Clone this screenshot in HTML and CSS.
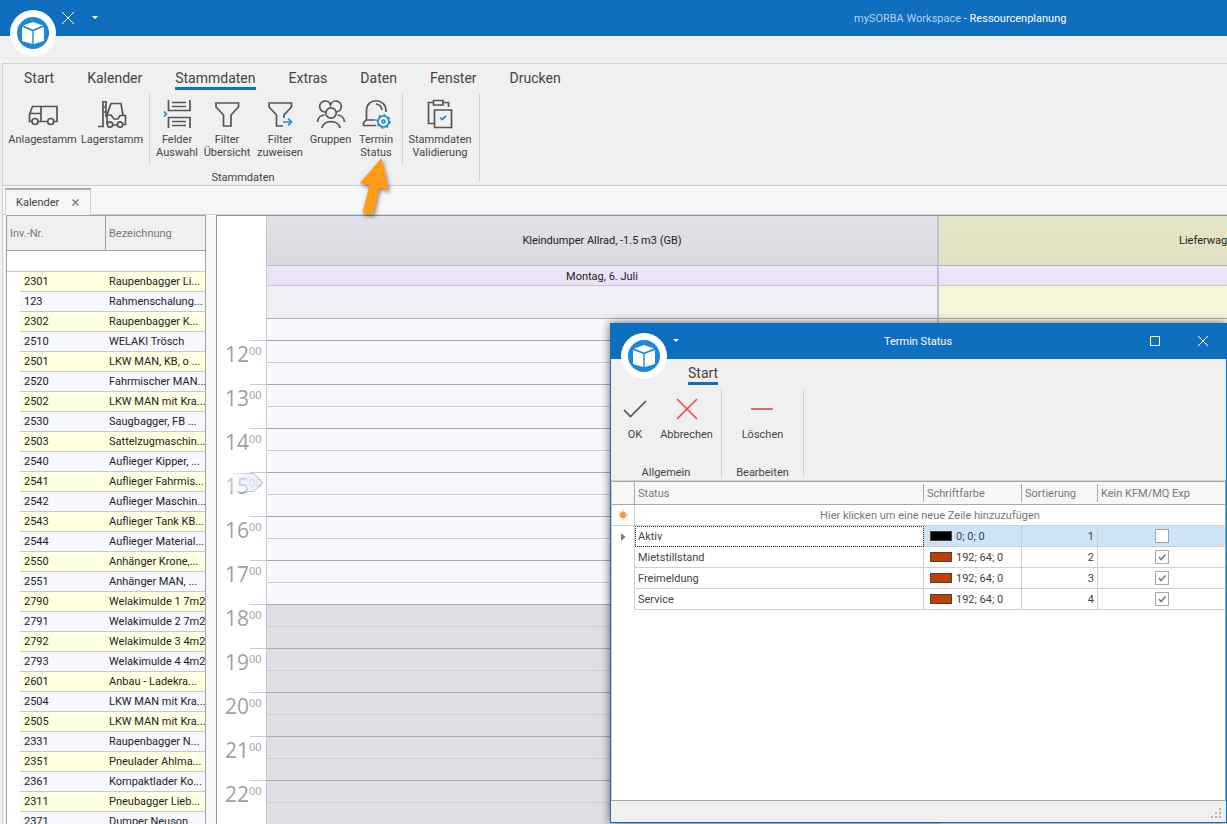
FILE: index.html
```html
<!DOCTYPE html>
<html lang="de">
<head>
    <meta charset="UTF-8">
    <meta name="viewport" content="width=device-width, initial-scale=1.0">
    <title>mySORBA Workspace - Ressourcenplanung</title>
    <link rel="stylesheet" href="styles.css">
</head>
<body>
    <!-- Shared symbols -->
    <svg class="symbols" aria-hidden="true">
        <symbol id="logo" viewBox="0 0 46 46">
            <circle cx="23" cy="23" r="23" fill="#fff"/>
            <circle cx="23" cy="23" r="16" fill="#1e88d2"/>
            <path d="M23 12 33 15.500 23 19.500 13 15.500ZM12 17 22.300 21V34L12 31ZM34 17 23.700 21V34L34 31Z" fill="#fff"/>
        </symbol>
        <symbol id="funnel" viewBox="0 0 32 32">
            <path d="M5 5H27.500V9L20 17V28H12.500V17L5 9Z"/>
        </symbol>
    </svg>

    <div class="app">
        <header class="titlebar">
            <button class="app-logo" aria-label="Menü"><svg><use href="#logo"/></svg></button>
            <button class="quick" aria-label="Schliessen"><svg width="14" height="14" viewBox="0 0 14 14"><path d="M1 1 13 13M13 1 1 13"/></svg></button>
            <button class="quick quick-arrow" aria-label="Anpassen"><svg width="6" height="4" viewBox="0 0 6 4"><path class="solid" d="M0 0H6L3 3Z"/></svg></button>
            <h1><span>mySORBA Workspace</span> - Ressourcenplanung</h1>
        </header>

        <div class="frame">
            <div class="ribbon">
                <nav class="ribbon-tabs">
                    <a href="#">Start</a>
                    <a href="#">Kalender</a>
                    <a href="#" class="active">Stammdaten</a>
                    <a href="#">Extras</a>
                    <a href="#">Daten</a>
                    <a href="#">Fenster</a>
                    <a href="#">Drucken</a>
                </nav>
                <div class="ribbon-group">
                    <div class="ribbon-buttons">
                        <button>
                            <svg class="icon" viewBox="0 0 32 32"><path d="M5 23.500H2.500V16.500L5.500 8.500H30V23.500H27M11 23.500H20.500M14 8.500V23.500M3 15.500H14"/><circle cx="8" cy="23.500" r="3"/><circle cx="23.700" cy="23.500" r="3"/></svg>
                            Anlagestamm
                        </button>
                        <button>
                            <svg class="icon" viewBox="0 0 32 32"><path d="M7 3V28M10 3V19M7 4H10M7 9H10M7 14H10M2 28.500H8M11 26V17L15 5.500H25L27 17M11 17H15L18 21H22L24 17.500H29.500V26.500H27M17 27H21"/><circle cx="14" cy="26.500" r="2.700"/><circle cx="24" cy="26.500" r="2.700"/></svg>
                            Lagerstamm
                        </button>
                        <span class="divider"></span>
                        <button>
                            <svg class="icon" viewBox="0 0 32 32"><path d="M7.500 2V12.500H29V2M11 4.500H25M11 8.500H25M7.500 30V19.500H29V30M11 23.500H25M11 27.500H25"/><path class="blue" d="M3 13.500 5.500 16 3 18.500"/></svg>
                            Felder<br>Auswahl
                        </button>
                        <button>
                            <svg class="icon"><use href="#funnel"/></svg>
                            Filter<br>Übersicht
                        </button>
                        <button>
                            <svg class="icon" viewBox="0 0 32 32"><path d="M20 20V17L27.500 9V5H5V9L12.500 17V28H19"/><path class="blue" d="M19 24H27.500M24 20.500 27.500 24 24 27.500"/></svg>
                            Filter<br>zuweisen
                        </button>
                        <button>
                            <svg class="icon" viewBox="0 0 32 32"><path d="M10.500 14A5.500 5.500 0 1 1 15.500 7A5.500 5.500 0 1 1 21 14M2.500 24C3 19.500 6 17 9.500 17M29.500 24C29 19.500 26 17 22.500 17M7 30C8 21.500 24 21.500 25 30"/><circle cx="16" cy="15" r="5.200"/></svg>
                            Gruppen
                        </button>
                        <button>
                            <svg class="icon" viewBox="0 0 32 32"><path d="M16 27.500H3.500V25L6.500 21.500V12.500C6.500 -0.500 25.500 -0.500 26 12.500V14M6.500 22H15.500M16 6C19.500 6.500 21.500 8.500 22 12"/><circle class="blue teeth" cx="23.500" cy="23.500" r="6.500"/><circle class="blue" cx="23.500" cy="23.500" r="5.500"/><circle class="blue" cx="23.500" cy="23.500" r="1.500"/></svg>
                            Termin<br>Status
                        </button>
                        <span class="divider"></span>
                        <button>
                            <svg class="icon" viewBox="0 0 32 32"><path d="M9 4.500H4.500V25.500H10M19 4.500H24.500V9M9.500 2.500H19V7H9.500ZM10.500 12H27.500V29.500H10.500Z"/><path class="blue" d="M16 19.500 18 21.500 22 18"/></svg>
                            Stammdaten<br>Validierung
                        </button>
                    </div>
                    <div class="caption">Stammdaten</div>
                </div>
            </div>

            <div class="doc-tabs">
                <div class="doc-tab">Kalender <button aria-label="Tab schliessen"><svg width="7" height="7" viewBox="0 0 7 7"><path d="M.5 .5 6.500 6.500M6.500 .5 .5 6.500"/></svg></button></div>
            </div>

            <main class="workspace">
                <div class="inventory">
                    <table>
                        <colgroup><col class="c-indicator"><col class="c-number"><col></colgroup>
                        <thead>
                            <tr><th colspan="2">Inv.-Nr.</th><th>Bezeichnung</th></tr>
                        </thead>
                        <tbody>
                            <tr class="filter"><td colspan="3"></td></tr>
                            <tr><td></td><td>2301</td><td>Raupenbagger Li...</td></tr>
                            <tr><td></td><td>123</td><td>Rahmenschalung...</td></tr>
                            <tr><td></td><td>2302</td><td>Raupenbagger K...</td></tr>
                            <tr><td></td><td>2510</td><td>WELAKI Trösch</td></tr>
                            <tr><td></td><td>2501</td><td>LKW MAN, KB, o ...</td></tr>
                            <tr><td></td><td>2520</td><td>Fahrmischer MAN...</td></tr>
                            <tr><td></td><td>2502</td><td>LKW MAN mit Kra...</td></tr>
                            <tr><td></td><td>2530</td><td>Saugbagger, FB ...</td></tr>
                            <tr><td></td><td>2503</td><td>Sattelzugmaschin...</td></tr>
                            <tr><td></td><td>2540</td><td>Auflieger Kipper, ...</td></tr>
                            <tr><td></td><td>2541</td><td>Auflieger Fahrmis...</td></tr>
                            <tr><td></td><td>2542</td><td>Auflieger Maschin...</td></tr>
                            <tr><td></td><td>2543</td><td>Auflieger Tank KB...</td></tr>
                            <tr><td></td><td>2544</td><td>Auflieger Material...</td></tr>
                            <tr><td></td><td>2550</td><td>Anhänger Krone,...</td></tr>
                            <tr><td></td><td>2551</td><td>Anhänger MAN, ...</td></tr>
                            <tr><td></td><td>2790</td><td>Welakimulde 1 7m2</td></tr>
                            <tr><td></td><td>2791</td><td>Welakimulde 2 7m2</td></tr>
                            <tr><td></td><td>2792</td><td>Welakimulde 3 4m2</td></tr>
                            <tr><td></td><td>2793</td><td>Welakimulde 4 4m2</td></tr>
                            <tr><td></td><td>2601</td><td>Anbau - Ladekra...</td></tr>
                            <tr><td></td><td>2504</td><td>LKW MAN mit Kra...</td></tr>
                            <tr><td></td><td>2505</td><td>LKW MAN mit Kra...</td></tr>
                            <tr><td></td><td>2331</td><td>Raupenbagger N...</td></tr>
                            <tr><td></td><td>2351</td><td>Pneulader Ahlma...</td></tr>
                            <tr><td></td><td>2361</td><td>Kompaktlader Ko...</td></tr>
                            <tr><td></td><td>2311</td><td>Pneubagger Lieb...</td></tr>
                            <tr><td></td><td>2371</td><td>Dumper Neuson</td></tr>
                        </tbody>
                    </table>
                </div>

                <div class="calendar">
                    <ol class="ruler">
                        <li>12<sup>00</sup></li>
                        <li>13<sup>00</sup></li>
                        <li>14<sup>00</sup></li>
                        <li>15<sup>00</sup>
                            <svg class="now" width="42" height="24" viewBox="0 0 42 24">
                                <defs><linearGradient id="fade"><stop offset="0" stop-color="#fff" stop-opacity=".3"/><stop offset=".6" stop-color="#e8eefa" stop-opacity=".7"/><stop offset="1" stop-color="#e4ecfa" stop-opacity=".8"/></linearGradient>
                                <linearGradient id="edge"><stop offset="0" stop-color="#b4b9c8" stop-opacity="0"/><stop offset="1" stop-color="#a8aebc"/></linearGradient></defs>
                                <path d="M1 1.500H29L38 10.500 29 19.500H1" fill="url(#fade)" stroke="url(#edge)"/>
                            </svg>
                        </li>
                        <li>16<sup>00</sup></li>
                        <li>17<sup>00</sup></li>
                        <li>18<sup>00</sup></li>
                        <li>19<sup>00</sup></li>
                        <li>20<sup>00</sup></li>
                        <li>21<sup>00</sup></li>
                        <li>22<sup>00</sup></li>
                    </ol>
                    <section class="resource">
                        <h2>Kleindumper Allrad, -1.5 m3 (GB)</h2>
                        <h3>Montag, 6. Juli</h3>
                        <div class="all-day"></div>
                        <div class="slots"></div>
                        <div class="slots off-hours"></div>
                    </section>
                    <section class="resource resource-yellow">
                        <h2>Lieferwagen VW Crafter, Kasten, -3.5 to</h2>
                        <h3></h3>
                        <div class="all-day"></div>
                        <div class="slots"></div>
                    </section>
                </div>
            </main>
        </div>

        <!-- Pointer at the Termin Status button -->
        <svg class="pointer" width="40" height="68" viewBox="0 0 40 68"><path d="M25.500 4 33 36 23.500 33.500 17 61 6.500 58.500 13.500 31.500 4 29Z"/></svg>

        <section class="dialog" role="dialog" aria-labelledby="dialog-title">
            <header class="dialog-title">
                <button class="app-logo" aria-label="Menü"><svg><use href="#logo"/></svg></button>
                <button class="quick dialog-arrow" aria-label="Anpassen"><svg width="6" height="4" viewBox="0 0 6 4"><path class="solid" d="M0 0H6L3 3Z"/></svg></button>
                <h2 id="dialog-title">Termin Status</h2>
                <button class="win-button" aria-label="Maximieren"><svg width="10" height="10" viewBox="0 0 10 10"><path d="M.5 .5H9.500V9.500H.5Z"/></svg></button>
                <button class="win-button" aria-label="Schliessen"><svg width="10" height="10" viewBox="0 0 10 10"><path d="M0 0 10 10M10 0 0 10"/></svg></button>
            </header>
            <nav class="ribbon-tabs dialog-tabs"><a href="#" class="active">Start</a></nav>
            <div class="dialog-ribbon">
                <div class="dialog-group">
                    <div class="dialog-buttons">
                        <button class="ok"><svg class="icon" viewBox="0 0 32 32"><path d="M5 17 11.500 23.500 27 8"/></svg>OK</button>
                        <button class="cancel"><svg class="icon" viewBox="0 0 32 32"><path class="red" d="M6 6 26 26M26 6 6 26"/></svg>Abbrechen</button>
                    </div>
                    <div class="caption">Allgemein</div>
                </div>
                <div class="dialog-group">
                    <div class="dialog-buttons">
                        <button><svg class="icon" viewBox="0 0 32 32"><path class="red" d="M5 16H27"/></svg>Löschen</button>
                    </div>
                    <div class="caption">Bearbeiten</div>
                </div>
            </div>
            <div class="status-grid">
                <table>
                    <colgroup><col class="c-mark"><col><col class="c-color"><col class="c-sort"><col class="c-exp"></colgroup>
                    <thead>
                        <tr><th></th><th>Status</th><th>Schriftfarbe</th><th>Sortierung</th><th>Kein KFM/MQ Exp</th></tr>
                    </thead>
                    <tbody>
                        <tr class="new-row">
                            <td class="mark"><svg width="10" height="10" viewBox="0 0 10 10"><path d="M5 0V10M0 5H10M1.500 1.500 8.500 8.500M8.500 1.500 1.500 8.500" stroke="#f9a24a"/><circle cx="5" cy="5" r="3" fill="#f9943a"/></svg></td>
                            <td colspan="4">Hier klicken um eine neue Zeile hinzuzufügen</td>
                        </tr>
                        <tr class="selected">
                            <td class="mark"><svg width="5" height="8" viewBox="0 0 5 8"><path d="M0 0 4.500 4 0 8Z" fill="#808080"/></svg></td>
                            <td class="focused">Aktiv</td>
                            <td><span class="swatch black"></span>0; 0; 0</td>
                            <td class="number">1</td>
                            <td class="check"><input type="checkbox" aria-label="Kein KFM/MQ Exp Aktiv"></td>
                        </tr>
                        <tr>
                            <td class="mark"></td>
                            <td>Mietstillstand</td>
                            <td><span class="swatch"></span>192; 64; 0</td>
                            <td class="number">2</td>
                            <td class="check"><input type="checkbox" checked aria-label="Kein KFM/MQ Exp Mietstillstand"></td>
                        </tr>
                        <tr>
                            <td class="mark"></td>
                            <td>Freimeldung</td>
                            <td><span class="swatch"></span>192; 64; 0</td>
                            <td class="number">3</td>
                            <td class="check"><input type="checkbox" checked aria-label="Kein KFM/MQ Exp Freimeldung"></td>
                        </tr>
                        <tr>
                            <td class="mark"></td>
                            <td>Service</td>
                            <td><span class="swatch"></span>192; 64; 0</td>
                            <td class="number">4</td>
                            <td class="check"><input type="checkbox" checked aria-label="Kein KFM/MQ Exp Service"></td>
                        </tr>
                    </tbody>
                </table>
            </div>
            <footer class="dialog-footer">
                <svg width="12" height="12" viewBox="0 0 12 12"><path d="M8 0h2v2h-2zM4 4h2v2h-2zM8 4h2v2h-2zM0 8h2v2h-2zM4 8h2v2h-2zM8 8h2v2h-2z" fill="#b4b4b4"/></svg>
            </footer>
        </section>
    </div>
</body>
</html>
```
FILE: styles.css
```css
* {
    box-sizing: border-box;
}
body {
    margin: 0;
    font-family: Tahoma, Roboto, sans-serif;
    font-size: 11px;
    line-height: 13px;
    color: #444;
    background-color: #f0f0f0;
}
button {
    font: inherit;
    color: inherit;
    background: none;
    border: none;
    padding: 0;
}
h1, h2, h3 {
    margin: 0;
    font-size: 11px;
    font-weight: normal;
}
table {
    border-collapse: separate;
    border-spacing: 0;
    table-layout: fixed;
    width: 100%;
}
svg {
    display: block;
    fill: none;
}
.symbols {
    position: absolute;
    width: 0;
    height: 0;
}
.app {
    position: relative;
    height: 100vh;
    display: flex;
    flex-direction: column;
    overflow: hidden;
}

/* Title bar */
.titlebar {
    flex: none;
    display: flex;
    align-items: center;
    height: 36px;
    padding-left: 10px;
    background-color: #106ebe;
    color: #fff;
}
.app-logo {
    flex: none;
    align-self: flex-start;
    width: 46px;
    height: 46px;
    margin-top: 10px;
    z-index: 1;
}
.app-logo svg {
    width: 46px;
    height: 46px;
}
.quick {
    margin-left: 5px;
}
.quick svg, .win-button svg {
    stroke: #fff;
}
.quick .solid {
    fill: #fff;
    stroke: none;
}
.quick-arrow {
    margin-left: 17px;
}
.titlebar h1 {
    margin-left: 756px;
    white-space: nowrap;
}
.titlebar h1 span {
    color: #b5d2ec;
}

/* Ribbon */
.frame {
    flex: 1;
    min-height: 0;
    display: flex;
    flex-direction: column;
    margin: 27px 0 0 2px;
    border-left: 1px solid #d0d0d0;
    border-top: 1px solid #d0d0d0;
    background-color: #f7f7f7;
}
.ribbon {
    flex: none;
    height: 122px;
    background-color: #f0f0f0;
    border-bottom: 1px solid #d0d0d0;
}
.ribbon-tabs {
    display: flex;
    gap: 33px;
    padding: 4px 0 0 21px;
    font-size: 14px;
    line-height: 21px;
}
.ribbon-tabs a {
    height: 22px;
    color: #444;
    text-decoration: none;
    border-bottom: 3px solid transparent;
}
.ribbon-tabs .active {
    border-color: #106ebe;
}
.ribbon-group {
    display: inline-flex;
    flex-direction: column;
    height: 88px;
    margin-top: 4px;
    padding-left: 4px;
    border-right: 1px solid #d0d0d0;
}
.ribbon-buttons {
    display: grid;
    grid-template-columns: 71px 68px 7px 48px 52px 54px 47px 44px 8px 73px;
    height: 70px;
}
.ribbon-buttons button, .dialog-buttons button {
    padding-top: 4px;
    white-space: nowrap;
}
.ribbon-buttons button {
    align-self: start;
}
.ribbon-buttons button:last-child {
    padding-right: 5px;
}
.icon {
    width: 32px;
    height: 32px;
    margin: 0 auto 3px;
    stroke: #555;
    stroke-width: 1.7;
}
.icon .blue {
    stroke: #1e88d2;
}
.icon .teeth {
    stroke-dasharray: 2 3;
}
.icon .red {
    stroke: #f04a48;
}
.divider {
    width: 1px;
    height: 70px;
    margin: 0 auto;
    background-color: #d0d0d0;
}
.caption {
    margin-top: 7px;
    text-align: center;
}

/* Document tabs */
.doc-tabs {
    flex: none;
    display: flex;
    height: 29px;
    padding: 2px 0 0 2px;
    border-bottom: 1px solid #d0d0d0;
}
.doc-tab {
    display: flex;
    align-items: center;
    gap: 13px;
    height: 27px;
    padding: 0 11px 0 10px;
    border: 1px solid #d0d0d0;
    border-top: 2px solid #a8a8a8;
    border-bottom: none;
    background-color: #f7f7f7;
}
.doc-tab svg {
    stroke: #777;
    stroke-width: 1.4;
}
.workspace {
    flex: 1;
    min-height: 0;
    display: flex;
    gap: 10px;
    padding-left: 3px;
    color: #222;
}

/* Inventory list */
.inventory {
    flex: none;
    width: 200px;
    overflow: hidden;
    border: 1px solid #a0a0a0;
    border-bottom: none;
    background-color: #fff;
}
.inventory .c-indicator {
    width: 13px;
}
.inventory .c-number {
    width: 86px;
}
.inventory th {
    height: 35px;
    padding: 0 3px;
    background-color: #f0f0f0;
    border-bottom: 1px solid #a0a0a0;
    color: #777;
    font-weight: normal;
    text-align: left;
}
.inventory th:first-child {
    border-right: 1px solid #a0a0a0;
}
.inventory td {
    height: 20px;
    padding: 0 3px;
    border-bottom: 1px solid #c8c8c8;
    white-space: nowrap;
    background-color: #f8f8ff;
}
.inventory td:nth-child(2) {
    padding-left: 4px;
}
.inventory tr:nth-child(even) td {
    background-color: #ffffe1;
}
.inventory tr td:first-child,
.inventory tr:nth-child(even) td:first-child {
    padding: 0;
    border-bottom: none;
    background-color: #fff;
}
.inventory .filter td:first-child {
    height: 21px;
    border-bottom: 1px solid #c8c8c8;
}

/* Calendar */
.calendar {
    flex: 1;
    min-width: 0;
    display: flex;
    overflow: hidden;
    border-left: 1px solid #9494a0;
    border-top: 1px solid #9494a0;
}
.ruler {
    flex: none;
    width: 50px;
    margin: 0;
    padding: 124px 0 0;
    list-style: none;
    background-color: #fff;
    border-right: 1px solid #c8c8d0;
    color: #a0a0a8;
    font-family: Tahoma, "Open Sans", sans-serif;
}
.ruler li {
    position: relative;
    display: flex;
    height: 44px;
    padding-left: 8px;
    font-size: 21px;
    line-height: 28px;
    background: linear-gradient(#c8c8d0, #c8c8d0) right top / 16px 1px no-repeat;
}
.ruler sup {
    font-size: 11px;
    line-height: 22px;
    vertical-align: top;
}
.ruler .now {
    position: absolute;
    left: 8px;
    top: 0;
}
.resource {
    flex: 0 0 672px;
    display: flex;
    flex-direction: column;
    border-right: 2px solid #c4c4cb;
    background-color: #f8f8ff;
    text-align: center;
}
.resource h2 {
    flex: none;
    height: 50px;
    line-height: 50px;
    background: linear-gradient(#e2e1e7, #dad9df);
    border-bottom: 1px solid #b8b8be;
}
.resource h3 {
    flex: none;
    height: 20px;
    line-height: 21px;
    background: linear-gradient(#efe7fa, #e9e0f6);
    border-bottom: 1px solid #c8c8d0;
}
.all-day {
    flex: none;
    height: 33px;
    background-color: #f0eff6;
    border-bottom: 1px solid #b0b0b6;
}
/* one hour is 44px; the view starts at 11:30 */
.slots {
    flex: none;
    height: 285px;
    background: repeating-linear-gradient(#a8a8ae 0 1px, transparent 1px 22px, #cdcdd4 22px 23px, transparent 23px 44px) 0 21px;
    background-repeat: no-repeat;
}
.off-hours {
    flex: 1;
    background-color: #e0dfe4;
    background-position: 0 0;
}
.resource-yellow {
    background-color: #fcfce4;
}
.resource-yellow h2 {
    background: linear-gradient(#e6e7c8, #dfe0c2);
    border-bottom-color: #b8b9a4;
}
.resource-yellow .all-day {
    background-color: #f5f6d8;
}

.pointer {
    position: absolute;
    left: 356px;
    top: 154px;
    fill: #ff9c17;
    filter: drop-shadow(1px 2px 2px rgba(0,0,0,0.5));
}

/* Termin Status window */
.dialog {
    position: absolute;
    left: 610px;
    top: 323px;
    right: 0;
    bottom: 1px;
    display: flex;
    flex-direction: column;
    background-color: #f0f0f0;
    border: 1px solid #106ebe;
    border-top: none;
    box-shadow: 0 0 9px rgba(0,0,0,0.6);
}
.dialog-title {
    flex: none;
    display: flex;
    align-items: center;
    height: 36px;
    padding: 0 18px 0 10px;
    background-color: #106ebe;
    color: #fff;
}
.dialog-arrow {
    margin-left: 6px;
}
.dialog-title h2 {
    flex: 1;
    padding-left: 7px;
    text-align: center;
}
.win-button + .win-button {
    margin-left: 38px;
}
.dialog-tabs {
    padding: 4px 0 0 77px;
}
.dialog-ribbon {
    flex: none;
    display: flex;
    height: 96px;
    padding-top: 4px;
    border-bottom: 1px solid #d0d0d0;
}
.dialog-group {
    height: 88px;
    padding: 0 8px;
    border-right: 1px solid #d0d0d0;
}
.dialog-group + .dialog-group {
    width: 82px;
}
.dialog-buttons {
    display: flex;
    justify-content: center;
    align-items: flex-start;
    gap: 9px;
    height: 70px;
}
.dialog-buttons .ok {
    width: 32px;
}
.dialog-buttons .cancel {
    width: 53px;
}
.status-grid {
    flex: 1;
    min-height: 0;
    background-color: #fff;
    border: 1px solid #a8a8a8;
    border-left-color: #d0d0d0;
}
.status-grid .c-mark {
    width: 23px;
}
.status-grid .c-color {
    width: 98px;
}
.status-grid .c-sort {
    width: 76px;
}
.status-grid .c-exp {
    width: 127px;
}
.status-grid th {
    height: 23px;
    padding: 0 3px;
    border-bottom: 1px solid #a8a8a8;
    background: linear-gradient(#a8a8a8, #a8a8a8) right center / 1px 18px no-repeat #f7f7f7;
    color: #777;
    font-weight: normal;
    text-align: left;
    white-space: nowrap;
}
.status-grid th:first-child {
    background-size: 1px 100%;
}
.status-grid th:last-child {
    background-image: none;
}
.status-grid td {
    height: 21px;
    padding: 0 3px;
    border-right: 1px solid #d0d0d0;
    border-bottom: 1px solid #d0d0d0;
    white-space: nowrap;
}
.status-grid td:last-child {
    border-right: none;
}
.status-grid .mark {
    padding: 0;
    border-bottom: none;
    background-color: #fff;
}
.status-grid .mark svg {
    margin: 0 auto;
}
.new-row td {
    text-align: center;
    color: #777;
}
.status-grid .new-row .mark {
    border-bottom: 1px solid #d0d0d0;
}
.selected td {
    background-color: #cde4f7;
}
.status-grid .focused {
    background-color: #fff;
    outline: 1px dotted #333;
    outline-offset: -1px;
}
.swatch {
    display: inline-block;
    width: 22px;
    height: 10px;
    margin: 0 4px 0 3px;
    vertical-align: -1px;
    background-color: #c04000;
    border: 1px solid #444;
}
.swatch.black {
    background-color: #000;
}
.status-grid .number {
    text-align: right;
}
.status-grid .check {
    text-align: center;
}
.check input {
    appearance: none;
    display: block;
    width: 14px;
    height: 14px;
    margin: 0 auto;
    border: 1px solid #a8a8a8;
    background-color: #fff;
}
.check input:checked {
    background-image: url("data:image/svg+xml,%3Csvg xmlns='http://www.w3.org/2000/svg' viewBox='0 0 12 12'%3E%3Cpath d='M3 6 5 8.500 9.500 3.500' fill='none' stroke='%23777' stroke-width='1.500'/%3E%3C/svg%3E");
}
.dialog-footer {
    flex: none;
    display: flex;
    justify-content: flex-end;
    align-items: flex-end;
    height: 21px;
    padding: 0 3px 2px;
}
```
